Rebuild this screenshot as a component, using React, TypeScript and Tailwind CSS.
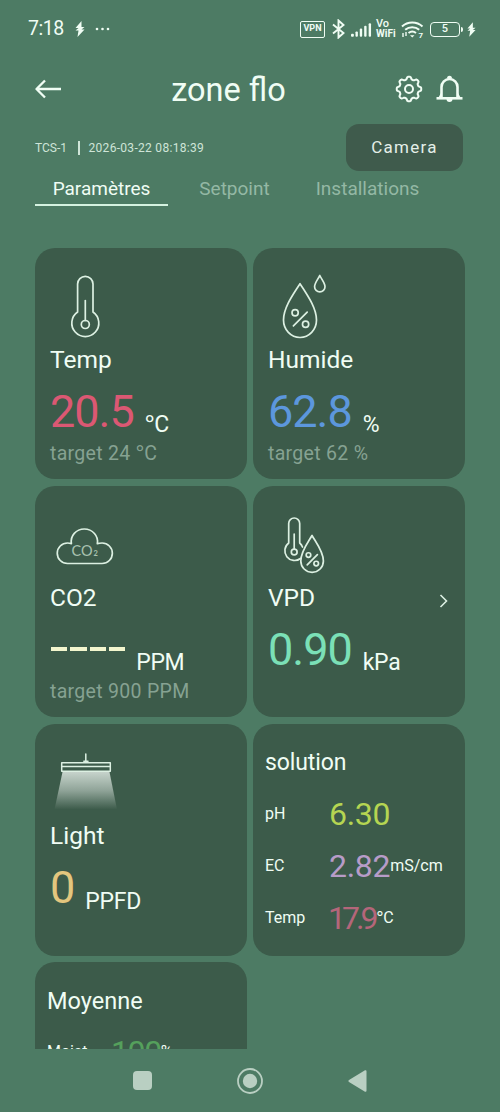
import React from 'react';

type Metric = {
  label: string;
  value: string;
  unit: string;
  target?: string;
  color: string;
  icon: React.ReactNode;
  arrow?: boolean;
};

// the degree ring of Noto Sans is wider than Roboto's
const WithDegree = ({ text }: { text: string }) => {
  const parts = text.split('°');
  if (parts.length === 1) return <>{text}</>;
  return (
    <>
      {parts[0]}
      <span className="font-['Noto_Sans',sans-serif] leading-none">°</span>
      {parts[1]}
    </>
  );
};

const PercentMark = ({ x, y, s }: { x: number; y: number; s: number }) => (
  <g transform={`translate(${x} ${y}) scale(${s})`} strokeWidth={1.7 / s}>
    <circle cx="-4.5" cy="-5" r="2.7" />
    <circle cx="4.6" cy="5" r="2.7" />
    <path d="M6 -5.5L-6 6.5" />
  </g>
);

const iconProps = {
  width: 90,
  height: 76,
  viewBox: '0 0 90 76',
  fill: 'none',
  stroke: '#dcf0e2',
  strokeWidth: 1.7,
  strokeLinecap: 'round' as const,
  strokeLinejoin: 'round' as const,
};

const TempIcon = () => (
  <svg {...iconProps}>
    <path d="M27.6 45V17a7.700 7.700 0 0 1 15.400 0V45a13.500 13.500 0 1 1-15.400 0z" />
    <path d="M35.300 33.500v20" />
    <circle cx="35.300" cy="57.500" r="4" />
  </svg>
);

const HumidityIcon = () => (
  <svg {...iconProps}>
    <path d="M32 16.700C26.500 25.500 15.500 40 15.500 53a16.500 17.500 0 0 0 33 0C48.500 40 37.500 25.500 32 16.700z" />
    <path d="M51.800 8.500C49.500 13 46.600 16 46.600 19.700a5.200 5.200 0 0 0 10.400 0C57 16 54 13 51.800 8.500z" />
    <PercentMark x={32.3} y={51.5} s={1.15} />
  </svg>
);

const Co2Icon = () => (
  <svg {...iconProps}>
    <path d="M17.500 58.500a10.200 10.200 0 0 1 0-20.500q1.800 0 3.900.6c-1.300-7.700 4.700-14.600 12.900-14.600s14.500 7 13 14.600q2.300-.6 4.800-.6a10.200 10.200 0 0 1 0 20.500z" />
    <text x="21.500" y="51" fill="#a9c2b0" stroke="none" fontSize="14.500" fontFamily="Lato" fontWeight="400" textLength="21">CO</text>
    <text x="43.500" y="50.500" fill="#a9c2b0" stroke="none" fontSize="7.500" fontWeight="700" fontFamily="Lato">2</text>
  </svg>
);

const VpdIcon = () => (
  <svg {...iconProps}>
    <path d="M20.700 38V18.500a5.500 5.500 0 0 1 11 0V38a9.500 9.500 0 0 1 2.800 4M20.700 38a9.300 9.300 0 1 0 11.800 15.500" />
    <path d="M26.200 29v15" />
    <circle cx="26.200" cy="47" r="2.900" />
    <path d="M44 30.500C40 37.500 32.800 46.500 32.800 56a11.300 11.300 0 0 0 22.600 0C55.400 46.500 48 37.500 44 30.500z" />
    <PercentMark x={44.3} y={54.3} s={0.85} />
  </svg>
);

const LightIcon = () => (
  <svg {...iconProps}>
    <defs>
      <linearGradient id="beam" x1="0" y1="0" x2="0" y2="1">
        <stop offset="0" stopColor="#c6d3cb" />
        <stop offset="0.5" stopColor="#c6d3cb" stopOpacity="0.6" />
        <stop offset="1" stopColor="#c6d3cb" stopOpacity="0" />
      </linearGradient>
    </defs>
    <path d="M12.500 29h47l7.500 37.500H4.500z" fill="url(#beam)" stroke="none" />
    <path d="M35.800 11v7M33.800 18.300h4.200" strokeWidth="1.500" />
    <rect x="11.700" y="19.700" width="48.600" height="8.600" strokeWidth="1.500" />
    <path d="M12 23.500h48" strokeWidth="1.500" />
  </svg>
);

// eight rounded teeth, traced around the circle
const gearPoints = Array.from({ length: 96 }, (_, i) => {
  const a = (i / 96) * Math.PI * 2;
  const wave = Math.tanh(2.2 * Math.cos(8 * a)) / Math.tanh(2.2);
  const r = 11 + 1.25 * wave;
  return `${(14 + r * Math.cos(a)).toFixed(2)},${(14 + r * Math.sin(a)).toFixed(2)}`;
}).join(' ');

const GearIcon = () => (
  <svg width="28" height="28" viewBox="0 0 28 28" fill="none" stroke="currentColor" strokeWidth="2" strokeLinejoin="round">
    <polygon points={gearPoints} />
    <circle cx="14" cy="14" r="4" />
  </svg>
);

const metrics: Metric[] = [
  { label: 'Temp', value: '20.5', unit: '°C', target: 'target 24 °C', color: 'text-[#db5873]', icon: <TempIcon /> },
  { label: 'Humide', value: '62.8', unit: '%', target: 'target 62 %', color: 'text-[#5c97dd]', icon: <HumidityIcon /> },
  { label: 'CO2', value: '----', unit: 'PPM', target: 'target 900 PPM', color: 'text-[#f3f6ce]', icon: <Co2Icon /> },
  { label: 'VPD', value: '0.90', unit: 'kPa', color: 'text-[#7be0b7]', icon: <VpdIcon />, arrow: true },
  { label: 'Light', value: '0', unit: 'PPFD', color: 'text-[#e3c67e]', icon: <LightIcon /> },
];

const solution = [
  { label: 'pH', value: '6.30', unit: '', color: 'text-[#b5d552]', spacing: 'tracking-[-0.3px]' },
  { label: 'EC', value: '2.82', unit: 'mS/cm', color: 'text-[#b79cc8]', spacing: 'tracking-[-0.3px]' },
  { label: 'Temp', value: '17.9', unit: '°C', color: 'text-[#b4667a]', spacing: 'tracking-[-4px] -ml-px pr-[2px]' },
];

function MetricCard({ metric }: { metric: Metric }) {
  return (
    <div className="flex h-[231.5px] flex-col rounded-[20px] bg-[#3c5b4a] pr-4 pl-[15px] pt-[19px]">
      <div className="h-[76px]">{metric.icon}</div>
      <div className="flex h-[34px] items-center justify-between">
        <span className="text-[24.500px] leading-[34px]">{metric.label}</span>
        {metric.arrow && (
          <svg className="mt-1.5" width="10" height="14" viewBox="0 0 10 14" fill="none" stroke="#dcefe2" strokeWidth="1.600">
            <path d="M1.500 1l6 6-6 6" />
          </svg>
        )}
      </div>
      <div className="mt-[10px] flex h-[54.5px] items-end gap-[11px]">
        {metric.value === '----' ? (
          <span className="flex gap-[3px] self-start pt-[22.500px] pl-px" aria-label="----">
            {[0, 1, 2, 3].map((i) => (
              <span key={i} className="h-[3.500px] w-[16.300px] bg-[#f3f6ce]" />
            ))}
          </span>
        ) : (
          <span className={`self-start text-[45px] leading-[50px] tracking-[-1px] ${metric.color}`}>{metric.value}</span>
        )}
        <span className="text-[23px] leading-8 tracking-[-0.3px]">
          <WithDegree text={metric.unit} />
        </span>
      </div>
      {metric.target && (
        <span className="text-[19.500px] leading-[25px] tracking-[0.3px] whitespace-nowrap text-[#86a292]">
          <WithDegree text={metric.target} />
        </span>
      )}
    </div>
  );
}

function SolutionCard() {
  return (
    <div className="flex h-[231.5px] flex-col rounded-[20px] bg-[#3c5b4a] px-3 pt-[23px]">
      <span className="text-[23px] leading-8 tracking-[-0.1px]">solution</span>
      <div className="mt-[9px] flex flex-col">
        {solution.map((row) => (
          <div key={row.label} className="flex h-[52px] items-center">
            <span className="w-16 text-[16px]">{row.label}</span>
            <span className={`text-[32px] leading-10 ${row.spacing} ${row.color}`}>{row.value}</span>
            <span className="text-[16px]">
              <WithDegree text={row.unit} />
            </span>
          </div>
        ))}
      </div>
    </div>
  );
}

function AverageCard() {
  return (
    <div className="flex h-[231.5px] flex-col rounded-[20px] bg-[#3c5b4a] px-3 pt-[23px]">
      <span className="text-[23.500px] leading-8">Moyenne</span>
      <div className="mt-[9px] flex h-[52px] items-center">
        <span className="w-16 text-[16px]">Moist</span>
        <span className="text-[32px] leading-10 tracking-[-1.400px] text-[#55a05c]">100</span>
        <span className="text-[16px]">%</span>
      </div>
    </div>
  );
}

function StatusBar() {
  return (
    <div className="flex h-[58px] items-center justify-between pr-[24px] pl-[28px]">
      <div className="flex items-center">
        <span className="w-[47px] text-[19.500px] tracking-[-0.5px]">7:18</span>
        <svg width="10" height="16" viewBox="0 0 10 16" fill="currentColor">
          <path d="M6.500 0L.5 7h3L.5 9.500h3L2.500 16l7-7.500h-3L9.500 6h-3z" />
        </svg>
        <svg className="ml-[10px]" width="16" height="4" viewBox="0 0 16 4" fill="currentColor">
          <circle cx="2" cy="2" r="1.300" />
          <circle cx="7.500" cy="2" r="1.300" />
          <circle cx="13" cy="2" r="1.300" />
        </svg>
      </div>
      <div className="flex items-center">
        <span className="flex h-[17px] w-[25px] items-center justify-center rounded-[2px] border-[1.500px] border-current text-[9px] font-bold">VPN</span>
        <svg className="ml-[7px]" width="13" height="20" viewBox="0 0 13 20" fill="none" stroke="currentColor" strokeWidth="1.900">
          <path d="M1 5.500l10.500 8.500-5 4.500V1.500l5 4.500L1 14.500" />
        </svg>
        <svg className="ml-[6px]" width="21" height="15" viewBox="0 0 22 15" fill="currentColor">
          <rect x="0" y="12" width="3" height="3" rx="1" />
          <rect x="4.700" y="9.500" width="2.500" height="5.500" rx="1" />
          <rect x="9.200" y="6.500" width="2.500" height="8.500" rx="1" />
          <rect x="13.800" y="3.500" width="2.500" height="11.500" rx="1" />
          <rect x="18.500" y="1" width="2.500" height="14" rx="1" />
        </svg>
        <span className="ml-[4px] flex w-[21px] flex-col text-[10px] leading-[10px] font-bold">
          <span className="text-[11px] font-medium">Vo</span>
          <span>WiFi</span>
        </span>
        <svg className="ml-[4px]" width="23" height="18" viewBox="0 0 23 18" fill="none" stroke="currentColor" strokeWidth="2">
          <path d="M1 6.500a15 15 0 0 1 20.500 0M4.200 9.800a10.500 10.500 0 0 1 14 0M7.500 13a6 6 0 0 1 7.500 0" />
          <path d="M9 15.300h4.500l-2.250 2.200z" fill="currentColor" stroke="none" />
          <path d="M2 13v4M5 12v4" strokeWidth="1.400" />
          <text x="17.500" y="17.500" fill="currentColor" stroke="none" fontSize="8" fontWeight="700">7</text>
        </svg>
        <span className="ml-[6px] flex h-[15px] w-[30px] items-center justify-center rounded-[4px] border-[1.500px] border-current text-[11px] font-medium">5</span>
        <span className="ml-px h-[5px] w-[2px] rounded-r bg-current" />
        <svg className="ml-[4px]" width="9" height="15" viewBox="0 0 10 16" fill="currentColor">
          <path d="M6.500 0L.5 7h3L.5 9.500h3L2.500 16l7-7.500h-3L9.500 6h-3z" />
        </svg>
      </div>
    </div>
  );
}

function Header() {
  return (
    <div className="flex h-[62px] items-center pr-[37px] pl-[35px]">
      <svg width="27" height="20" viewBox="0 0 27 20" fill="none" stroke="currentColor" strokeWidth="2.300" strokeLinejoin="round">
        <path d="M10 1.500L1.500 10l8.500 8.500M1.500 10H26" />
      </svg>
      <h1 className="flex-1 pt-px text-center text-[32.500px] leading-10">zone flo</h1>
      <div className="flex items-center justify-end gap-[13px]">
        <GearIcon />
        <svg width="27" height="28" viewBox="0 0 27 28" fill="none" stroke="currentColor" strokeWidth="2.600">
          <path d="M5.500 22.500V12a8 8 0 0 1 16 0v10.500" />
          <path d="M.5 23.300h26" />
          <path d="M5.500 17v5.500H2.500zM21.500 17v5.500h3z" fill="currentColor" stroke="none" />
          <path d="M10.500 24h6a3 3 0 0 1-6 0zM11 3.500a2.500 2.700 0 0 1 5 0z" fill="currentColor" stroke="none" />
        </svg>
      </div>
    </div>
  );
}

export default function App() {
  return (
    <div className="flex h-[1112px] w-[500px] flex-col overflow-hidden bg-[#4d7b64] font-['Roboto','Noto_Sans',sans-serif] text-[#f0fdf4]">
      <StatusBar />
      <Header />

      <div className="flex h-[51px] items-start justify-between pr-[37px] pl-[35px] pt-[4px]">
        <div className="flex h-[47px] items-center text-[12px] text-[#cfe5d8]">
          <span className="w-[43px]">TCS-1</span>
          <span className="h-[14px] w-[1.500px] bg-[#cfe5d8]" />
          <span className="ml-[9px] tracking-[0.3px]">2026-03-22 08:18:39</span>
        </div>
        <button className="h-[47px] w-[117px] rounded-[13px] bg-[#3f5b4c] text-[17px] tracking-[1.300px] text-[#e4efe8]">Camera</button>
      </div>

      <div className="flex h-[35px] pl-[35px] text-[19px] leading-[36px]">
        <div className="flex h-[35px] w-[133px] justify-center border-b-2 border-[#d5f2e0]">Paramètres</div>
        <div className="w-[133px] text-center text-[#94b8a4]">Setpoint</div>
        <div className="w-[133px] text-center text-[#94b8a4]">Installations</div>
      </div>

      <main className="mt-[41.500px] grid flex-1 grid-cols-[212px_212px] content-start gap-x-[6px] gap-y-[6.750px] overflow-hidden px-[35px]">
        {metrics.map((m) => (
          <MetricCard key={m.label} metric={m} />
        ))}
        <SolutionCard />
        <AverageCard />
      </main>

      <nav className="flex h-[63px] items-center justify-center gap-[85px] text-[#b9cfc2]">
        <span className="h-[19px] w-[19px] rounded-[4px] bg-current" />
        <svg width="26" height="26" viewBox="0 0 26 26" fill="currentColor">
          <circle cx="13" cy="13" r="12" fill="none" stroke="currentColor" strokeWidth="1.800" />
          <circle cx="13" cy="13" r="7.200" />
        </svg>
        <svg width="19" height="22" viewBox="0 0 19 22" fill="currentColor">
          <path d="M17 .3L1 10q-1.200 1 0 2l16 9.700q1.500.5 1.500-1V1.300q0-1.500-1.500-1z" />
        </svg>
      </nav>
    </div>
  );
}
